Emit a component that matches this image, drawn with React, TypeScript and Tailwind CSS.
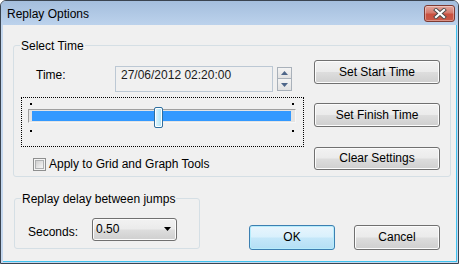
import React from 'react';

const font = "font-['Liberation_Sans',Arial,sans-serif]";

const WinButton: React.FC<{ children: React.ReactNode; className?: string }> = ({ children, className = '' }) => (
  <button
    className={`flex items-center justify-center rounded-[3px] border border-[#707070] bg-[linear-gradient(to_bottom,#f2f2f2_0%,#ebebeb_48%,#dddddd_52%,#cfcfcf_100%)] shadow-[inset_0_0_0_1px_#fcfcfc] text-[12px] leading-[15px] text-black ${className}`}
  >
    {children}
  </button>
);

const Tick: React.FC = () => <div className="h-[2px] w-[2px] bg-black" />;

const GroupBox: React.FC<{ title: string; className?: string; children: React.ReactNode }> = ({
  title,
  className = '',
  children,
}) => (
  <div className={`relative rounded-[3px] border border-[#d5dfe5] ${className}`}>
    <div className="absolute left-[6px] top-[-7px] bg-[#f0f0f0] px-[1px] text-[12px] leading-[15px] text-black">
      {title}
    </div>
    {children}
  </div>
);

export default function App() {
  const position = 0.48;

  return (
    <div className={`${font} h-[264px] w-[459px] select-none text-[12px] leading-[15px] text-black`}>
      <div className="flex h-full w-full flex-col rounded-t-[6px] border border-[#3a4450] bg-[#c4d7ee]">
        {/* title bar */}
        <div className="flex h-[24px] shrink-0 items-start justify-between rounded-t-[5px] bg-[linear-gradient(to_bottom,#a4bedd,#bcd2ec)] pl-[6px] pr-[3px]">
          <span className="pt-[6px] text-[12px] leading-[15px] text-black">Replay Options</span>
          <button className="mt-[4px] flex h-[17px] w-[31px] items-center justify-center rounded-[3px] border border-[#7d3a32] bg-[linear-gradient(to_bottom,#e3a79d_0%,#d47b6e_45%,#c9503f_55%,#c85a49_100%)] shadow-[inset_0_0_0_1px_rgba(255,255,255,0.35)]">
            <svg width="14" height="11" viewBox="0 0 14 11">
              <path d="M3 2 L11 9 M11 2 L3 9" stroke="#4a4a4a" strokeWidth="4" strokeLinecap="square" />
              <path d="M3 2 L11 9 M11 2 L3 9" stroke="#ffffff" strokeWidth="2.2" strokeLinecap="square" />
            </svg>
          </button>
        </div>

        {/* client area */}
        <div className="mb-[1px] ml-[2px] mr-[1px] flex flex-1 flex-col border-b border-r border-[#3fc3ef] bg-[#f0f0f0]">
          <GroupBox title="Select Time" className="ml-[10px] mt-[20px] flex h-[132px] w-[438px] items-start">
            {/* left column */}
            <div className="ml-[7px] mt-[20px] flex w-[283px] flex-col">
              <div className="flex h-[26px] items-start">
                <span className="mt-[2px] w-[94px] pl-[15px]">Time:</span>
                <div className="h-[26px] w-[158px] border border-[#bcc8d4] bg-[#f0f0f0] px-[5px] pt-[1px] text-[#1a1a1a]">
                  27/06/2012 02:20:00
                </div>
                <div className="ml-[4px] mt-[1px] flex h-[24px] w-[15px] flex-col">
                  <div className="flex h-[12px] items-center justify-center border border-[#a9b1ba] bg-[linear-gradient(to_bottom,#f4f4f4,#e2e2e2)]">
                    <svg width="7" height="4" viewBox="0 0 7 4">
                      <path d="M0 4 L3.5 0 L7 4 Z" fill="#4e6689" />
                    </svg>
                  </div>
                  <div className="flex h-[12px] items-center justify-center border border-t-0 border-[#a9b1ba] bg-[linear-gradient(to_bottom,#f4f4f4,#e2e2e2)]">
                    <svg width="7" height="4" viewBox="0 0 7 4">
                      <path d="M0 0 L7 0 L3.5 4 Z" fill="#4e6689" />
                    </svg>
                  </div>
                </div>
              </div>

              {/* slider */}
              <div className="mt-[5px] flex h-[50px] flex-col border border-dotted border-black">
                <div className="mt-[5px] flex justify-between pl-[8px] pr-[9px]">
                  <Tick />
                  <Tick />
                </div>
                <div className="relative ml-[6px] mt-[4px] h-[14px] w-[268px] border-l border-t border-b border-r border-l-[#a0a0a0] border-t-[#a0a0a0] border-b-[#f7f7f7] border-r-[#f7f7f7] bg-[#e4e4e4]">
                  <div className="ml-[3px] mt-[1px] h-[10px] w-[259px] bg-[#3399ff]" />
                  <div
                    className="absolute top-[-3px] h-[21px] w-[9px] rounded-[2px] border border-[#2f6f9f] bg-[linear-gradient(to_right,#e6f7fd,#a9e2f6)] shadow-[inset_0_0_0_1px_#ffffff]"
                    style={{ left: `${Math.round(position * 259) + 1}px` }}
                  />
                </div>
                <div className="mt-[7px] flex justify-between pl-[8px] pr-[9px]">
                  <Tick />
                  <Tick />
                </div>
              </div>

              {/* checkbox */}
              <label className="ml-[12px] mt-[10px] flex h-[15px] items-center gap-[3px]">
                <span className="flex h-[13px] w-[13px] items-center justify-center border border-[#8e8f8f] bg-[#f4f4f4]">
                  <span className="h-[9px] w-[9px] border border-[#aeb0b1] bg-[linear-gradient(to_bottom_right,#cfcfcf,#f7f7f7)]" />
                </span>
                <span>Apply to Grid and Graph Tools</span>
              </label>
            </div>

            {/* right column */}
            <div className="ml-[10px] mt-[14px] flex w-[126px] flex-col">
              <WinButton className="h-[24px] w-[126px]">Set Start Time</WinButton>
              <WinButton className="mt-[19px] h-[24px] w-[126px]">Set Finish Time</WinButton>
              <WinButton className="mt-[20px] h-[23px] w-[126px]">Clear Settings</WinButton>
            </div>
          </GroupBox>

          <div className="mt-[21px] flex items-start">
            <GroupBox title="Replay delay between jumps" className="ml-[11px] h-[51px] w-[186px]">
              <div className="ml-[13px] mt-[19px] flex items-start">
                <span className="mt-[7px] w-[64px]">Seconds:</span>
                <div className="flex h-[23px] w-[85px] items-start justify-between rounded-[3px] border border-[#707070] bg-[linear-gradient(to_bottom,#f2f2f2_0%,#ebebeb_48%,#dddddd_52%,#cfcfcf_100%)] pl-[3px] pr-[5px] pt-[3px] shadow-[inset_0_0_0_1px_#fcfcfc]">
                  <span>0.50</span>
                  <svg className="mt-[5px]" width="7" height="4" viewBox="0 0 7 4">
                    <path d="M0 0 L7 0 L3.5 4 Z" fill="#000000" />
                  </svg>
                </div>
              </div>
            </GroupBox>

            <button className="ml-[49px] mt-[27px] flex h-[25px] w-[86px] items-center justify-center rounded-[3px] border border-[#3c7fb1] bg-[linear-gradient(to_bottom,#e8f5fd_0%,#d9f0fc_48%,#c4e7f9_52%,#b4dff5_100%)] shadow-[inset_0_0_0_1px_#b6ecfc] text-[12px] leading-[15px] text-black">
              OK
            </button>
            <WinButton className="ml-[19px] mt-[27px] h-[25px] w-[86px]">Cancel</WinButton>
          </div>
        </div>
      </div>
    </div>
  );
}
